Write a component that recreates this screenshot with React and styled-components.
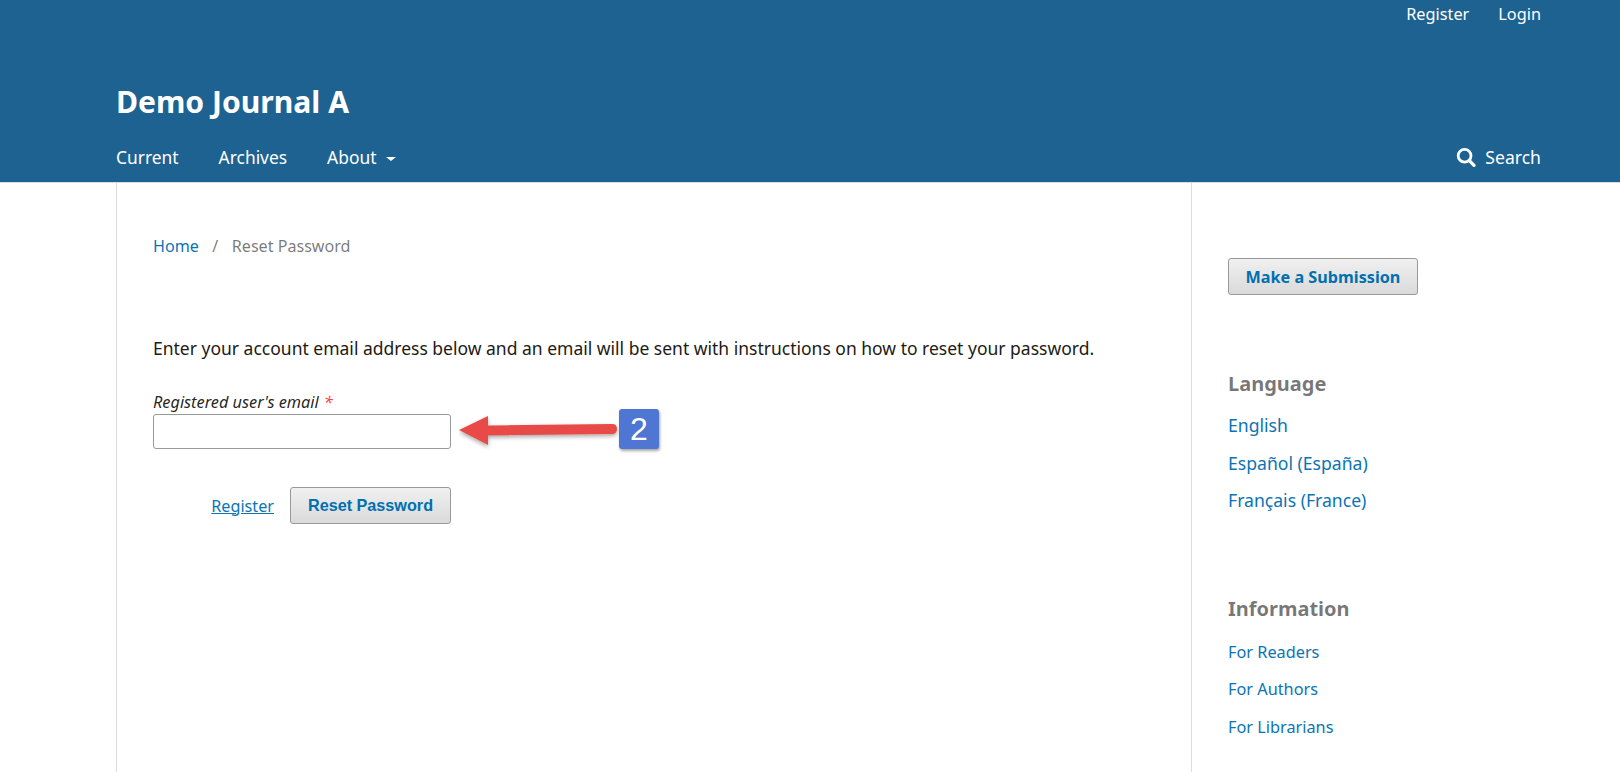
import React from "react";
import styled, { createGlobalStyle } from "styled-components";

const GlobalStyle = createGlobalStyle`
  html, body {
    margin: 0;
    padding: 0;
    height: 100%;
    overflow: hidden;
    background: #fff;
  }
  body {
    font-family: "Noto Sans", "Open Sans", sans-serif;
    color: rgba(0, 0, 0, 0.87);
  }
  #root {
    height: 100%;
  }
`;

const Page = styled.div`
  height: 772px;
  display: flex;
  flex-direction: column;
`;

const Header = styled.header`
  height: 182px;
  flex: none;
  background: #1e6292;
  border-bottom: 1px solid #ddd;
  color: #fff;
  padding: 0 79px 0 116px;
  display: flex;
  flex-direction: column;
`;

const UserNav = styled.nav`
  display: flex;
  justify-content: flex-end;
  gap: 29px;
  height: 70px;
  padding-top: 3px;
  box-sizing: border-box;
  font-size: 16.3px;
  line-height: 22px;
`;

const Title = styled.div`
  font-size: 30.1px;
  font-weight: 700;
  line-height: 40px;
  height: 40px;
  margin-top: 12px;
`;

const NavRow = styled.nav`
  display: flex;
  align-items: center;
  justify-content: space-between;
  margin-top: 23px;
  height: 24px;
  font-size: 17.4px;
`;

const NavLinks = styled.div`
  display: flex;
  align-items: center;
  gap: 40px;
`;

const Caret = styled.span`
  display: inline-block;
  margin-left: 10px;
  vertical-align: middle;
  border-top: 4px solid #fff;
  border-left: 5px solid transparent;
  border-right: 5px solid transparent;
`;

const SearchLink = styled.div`
  display: flex;
  align-items: center;
  gap: 9px;
  font-size: 17.6px;
`;

const Body = styled.div`
  flex: 1;
  display: flex;
  padding-left: 116px;
`;

const Main = styled.main`
  flex: none;
  width: 1076px;
  box-sizing: border-box;
  border-left: 1px solid #ddd;
  border-right: 1px solid #ddd;
  padding: 52px 0 0 36px;
`;

const Breadcrumb = styled.div`
  font-size: 16.1px;
  line-height: 22px;
  color: rgba(0, 0, 0, 0.54);
  display: flex;
  gap: 13.5px;
`;

const Link = styled.a`
  color: #0a74b4;
  text-decoration: ${(p) => (p.$underline ? "underline" : "none")};
`;

const Intro = styled.p`
  margin: 79px 0 0;
  font-size: 17.5px;
  line-height: 24px;
  color: #221a14;
`;

const FormLabel = styled.label`
  display: block;
  margin-top: 32px;
  font-size: 16.3px;
  line-height: 20px;
  font-style: italic;
  color: rgba(0, 0, 0, 0.87);
`;

const Required = styled.span`
  color: #ff4040;
  margin-left: 5px;
`;

const FieldRow = styled.div`
  position: relative;
  margin-top: 2px;
`;

const Input = styled.input`
  display: block;
  box-sizing: border-box;
  width: 298px;
  height: 35px;
  border: 1px solid #999;
  border-radius: 3px;
  background: #fff;
`;

const Callout = styled.div`
  position: absolute;
  left: 306px;
  top: -5px;
  display: flex;
  align-items: flex-start;
`;

const Badge = styled.div`
  width: 40px;
  height: 40px;
  background: #4f76d2;
  border-radius: 3px;
  box-shadow: 1px 2px 3px rgba(0, 0, 0, 0.35);
  color: #fff;
  font-family: "Liberation Sans", Arial, sans-serif;
  font-size: 32px;
  display: flex;
  align-items: center;
  justify-content: center;
`;

const Actions = styled.div`
  display: flex;
  align-items: center;
  width: 298px;
  justify-content: flex-end;
  gap: 16px;
  margin-top: 38px;
`;

const RegisterLink = styled(Link)`
  font-size: 16.2px;
`;

const Button = styled.button`
  box-sizing: border-box;
  height: ${(p) => p.$height}px;
  width: ${(p) => p.$width}px;
  padding: 0;
  border: 1px solid #999;
  border-radius: 3px;
  background: linear-gradient(#f0f0f0, #dadada);
  color: #0070b0;
  font-weight: 700;
  font-family: ${(p) =>
    p.$arial ? '"Liberation Sans", Arial, sans-serif' : '"Noto Sans", sans-serif'};
  font-size: ${(p) => p.$size}px;
`;

const Sidebar = styled.aside`
  flex: none;
  width: 300px;
  padding: 75px 0 0 36px;
  box-sizing: border-box;
`;

const Block = styled.div`
  margin-top: ${(p) => p.$top}px;
`;

const BlockTitle = styled.div`
  font-size: 20px;
  font-weight: 700;
  line-height: 26px;
  color: rgba(0, 0, 0, 0.54);
  margin-bottom: ${(p) => p.$gap}px;
`;

const BlockList = styled.ul`
  list-style: none;
  margin: 0;
  padding: 0;
  font-size: ${(p) => p.$size}px;
  li {
    height: 37.6px;
    line-height: 22px;
  }
`;

const SearchIcon = () => (
  <svg width="20" height="20" viewBox="0 0 20 20" aria-hidden="true">
    <circle cx="8.6" cy="8.8" r="6.4" fill="none" stroke="#fff" strokeWidth="2.8" />
    <path d="M13.4 13.6 L18 18.4" stroke="#fff" strokeWidth="3.2" strokeLinecap="round" />
  </svg>
);

const Arrow = () => (
  <svg width="160" height="46" viewBox="0 0 160 46" aria-hidden="true">
    <defs>
      <filter id="arrow-shadow" x="-10%" y="-30%" width="120%" height="180%">
        <feDropShadow dx="0" dy="2" stdDeviation="2" floodColor="#000" floodOpacity="0.35" />
      </filter>
    </defs>
    <path
      d="M0 21 L29 7 L29 16.5 L153 15 Q158 15 158 20 Q158 25 153 25 L29 26.5 L29 36 Z"
      fill="#e84c47"
      filter="url(#arrow-shadow)"
    />
  </svg>
);

export default function App() {
  return (
    <Page>
      <GlobalStyle />
      <Header>
        <UserNav>
          <span>Register</span>
          <span>Login</span>
        </UserNav>
        <Title>Demo Journal A</Title>
        <NavRow>
          <NavLinks>
            <span>Current</span>
            <span>Archives</span>
            <span>
              About
              <Caret />
            </span>
          </NavLinks>
          <SearchLink>
            <SearchIcon />
            Search
          </SearchLink>
        </NavRow>
      </Header>
      <Body>
        <Main>
          <Breadcrumb>
            <Link>Home</Link>
            <span>/</span>
            <span>Reset Password</span>
          </Breadcrumb>
          <Intro>
            Enter your account email address below and an email will be sent with
            instructions on how to reset your password.
          </Intro>
          <FormLabel>
            Registered user's email<Required>*</Required>
          </FormLabel>
          <FieldRow>
            <Input type="text" />
            <Callout>
              <Arrow />
              <Badge>2</Badge>
            </Callout>
          </FieldRow>
          <Actions>
            <RegisterLink $underline>Register</RegisterLink>
            <Button $arial $width={161} $height={37} $size={16.2}>
              Reset Password
            </Button>
          </Actions>
        </Main>
        <Sidebar>
          <Button $width={190} $height={37} $size={16.2}>
            Make a Submission
          </Button>
          <Block $top={76}>
            <BlockTitle $gap={17}>Language</BlockTitle>
            <BlockList $size={17.6}>
              <li><Link>English</Link></li>
              <li><Link>Español (España)</Link></li>
              <li><Link>Français (France)</Link></li>
            </BlockList>
          </Block>
          <Block $top={69}>
            <BlockTitle $gap={19}>Information</BlockTitle>
            <BlockList $size={16.3}>
              <li><Link>For Readers</Link></li>
              <li><Link>For Authors</Link></li>
              <li><Link>For Librarians</Link></li>
            </BlockList>
          </Block>
        </Sidebar>
      </Body>
    </Page>
  );
}
